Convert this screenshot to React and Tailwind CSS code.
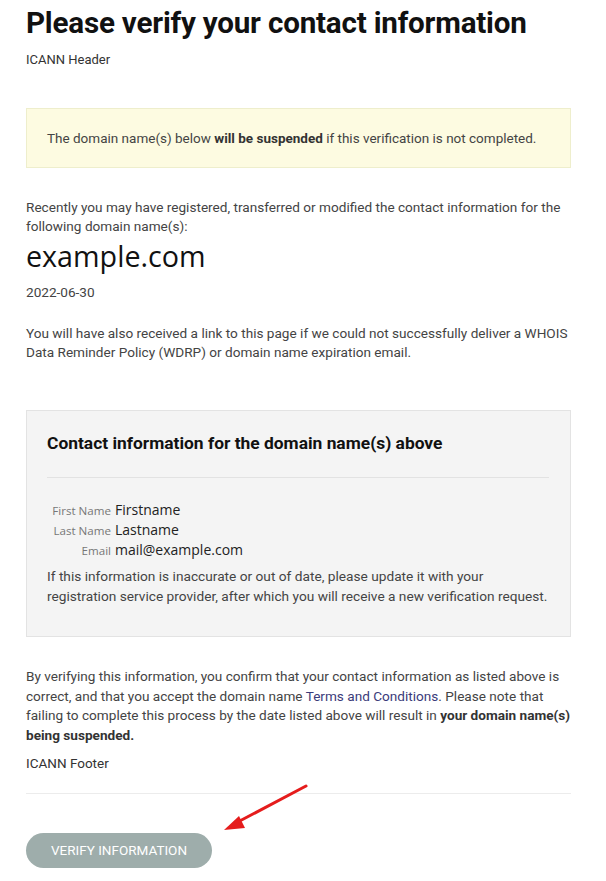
export default function App() {
  return (
    <div className="min-h-[881px] bg-white px-[26px] pt-[4px] text-[#333]" style={{ fontFamily: "Roboto, 'Liberation Sans', sans-serif" }}>
      <h1 className="text-[29.6px] font-bold leading-[38px] text-[#111] tracking-[-0.2px]">Please verify your contact information</h1>
      <p className="mt-[9px] text-[13px] leading-[18px] text-[#333]">ICANN Header</p>

      <div className="mt-[39px] w-[545px] border border-[#eeeecc] bg-[#fdfbe1] px-[20px] py-[19px] text-[13.5px] leading-[20px] text-[#444]">
        The domain name(s) below <b className="font-bold text-[#333]">will be suspended</b> if this verification is not completed.
      </div>

      <p className="mt-[30px] text-[13.6px] leading-[19px] text-[#444]">
        Recently you may have registered, transferred or modified the contact information for the following domain name(s):
      </p>
      <div className="mt-[1px] text-[28.7px] leading-[38px] text-[#111]" style={{ fontFamily: "'Open Sans', sans-serif" }}>example.com</div>
      <p className="mt-[8px] text-[13.6px] leading-[19px] text-[#444]">2022-06-30</p>
      <p className="mt-[22px] text-[13.6px] leading-[19px] text-[#444]">
        You will have also received a link to this page if we could not successfully deliver a WHOIS Data Reminder Policy (WDRP) or domain name expiration email.
      </p>

      <div className="mt-[48px] w-[545px] border border-[#e3e3e3] bg-[#f4f4f4] px-[20px] pt-[20px] pb-[30px]">
        <h2 className="text-[17.4px] font-bold leading-[24px] text-[#111]">Contact information for the domain name(s) above</h2>
        <div className="mt-[22px] mr-[1px] border-t border-[#e2e2e2]"></div>
        <div className="mt-[22px] grid grid-cols-[64px_1fr] gap-x-[4px] items-baseline" style={{ fontFamily: "'Open Sans', sans-serif" }}>
          <span className="text-right text-[11.6px] leading-[19px] text-[#777]">First Name</span>
          <span className="text-[14px] leading-[19px] text-[#222]">Firstname</span>
          <span className="text-right text-[11.6px] leading-[19px] text-[#777]">Last Name</span>
          <span className="text-[14px] leading-[19px] text-[#222]">Lastname</span>
          <span className="text-right text-[11.6px] leading-[19px] text-[#777]">Email</span>
          <span className="text-[14px] leading-[19px] text-[#222]">mail@example.com</span>
        </div>
        <p className="mt-[6px] whitespace-nowrap text-[13.7px] leading-[20px] text-[#444]">
          If this information is inaccurate or out of date, please update it with your
          <br />
          registration service provider, after which you will receive a new verification request.
        </p>
      </div>

      <p className="mt-[30px] text-[13.6px] leading-[19.5px] text-[#444]">
        By verifying this information, you confirm that your contact information as listed above is correct, and that you accept the domain name <a className="text-[#3b3b7a]">Terms and Conditions</a>. Please note that failing to complete this process by the date listed above will result in <b className="font-bold text-[#333]">your domain name(s) being suspended.</b>
      </p>
      <p className="mt-[9px] text-[13.5px] leading-[19px] text-[#333]">ICANN Footer</p>
      <div className="relative mt-[20px] w-[545px] border-t border-[#ececec]">
        <svg className="absolute left-[174px] top-[-23px]" width="120" height="70" viewBox="0 0 120 70">
          <line x1="106" y1="15" x2="34" y2="53" stroke="#e51c1c" strokeWidth="3" strokeLinecap="round" />
          <polygon points="24,59 39,45 45,57" fill="#e51c1c" />
        </svg>
      </div>
      <button className="mt-[39px] h-[35px] w-[186px] rounded-full bg-[#9eadab] text-[13.5px] uppercase text-white">Verify Information</button>
    </div>
  );
}
